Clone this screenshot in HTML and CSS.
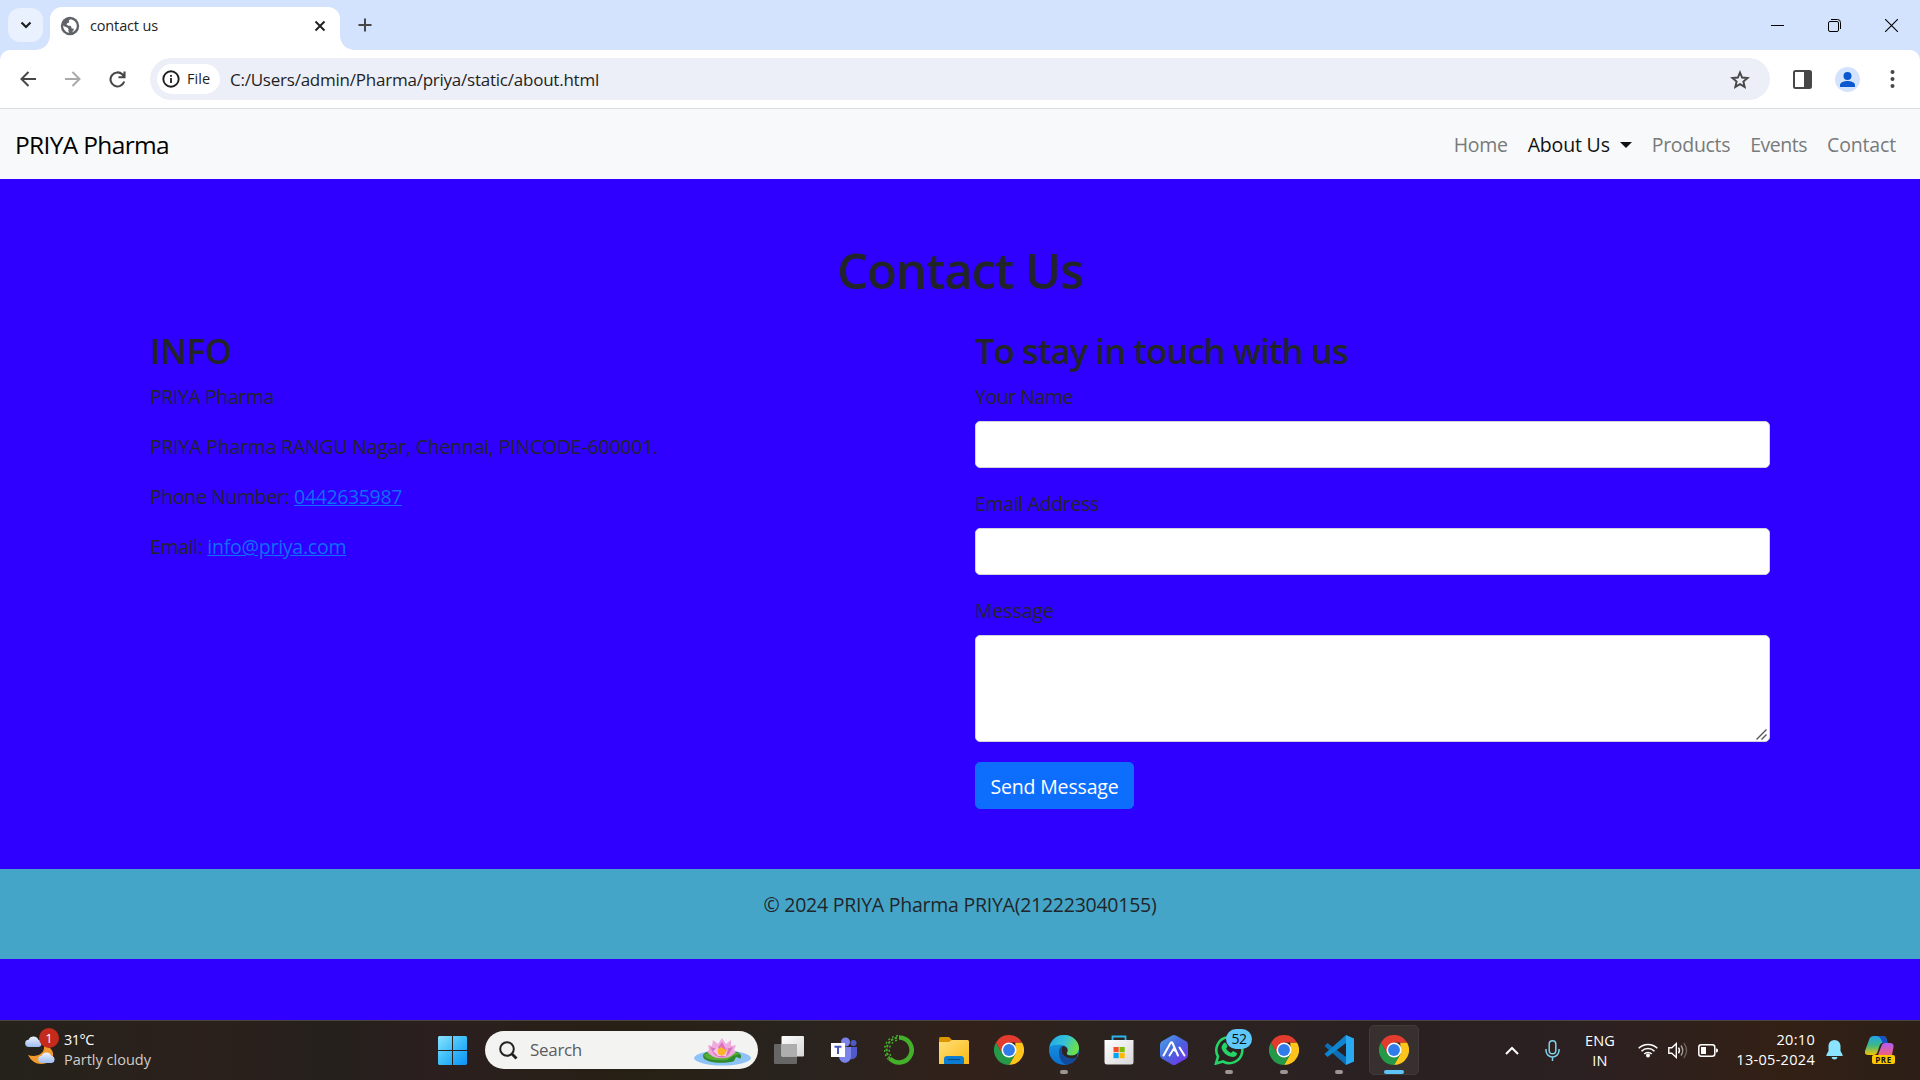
FILE: index.html
```html
<!DOCTYPE html>
<html lang="en">
<head>
<meta charset="utf-8">
<title>contact us</title>
<link rel="stylesheet" href="styles.css">
</head>
<body>
<svg class="defs" aria-hidden="true">
  <defs>
    <linearGradient id="g-win" x1="0" y1="0" x2="1" y2="1"><stop offset="0" stop-color="#8be3ff"/><stop offset=".5" stop-color="#3cbcf8"/><stop offset="1" stop-color="#0a92f5"/></linearGradient>
    <linearGradient id="g-folder" x1="0" y1="0" x2="1" y2="1"><stop offset="0" stop-color="#ffe07a"/><stop offset="1" stop-color="#fbb913"/></linearGradient>
    <linearGradient id="g-white" x1="0" y1="0" x2="1" y2="1"><stop offset="0" stop-color="#fff"/><stop offset="1" stop-color="#d6d6d6"/></linearGradient>
    <linearGradient id="g-edge" x1="0" y1="0" x2="1" y2=".4"><stop offset="0" stop-color="#1ea7ea"/><stop offset=".55" stop-color="#35c1d8"/><stop offset="1" stop-color="#6be04b"/></linearGradient>
    <linearGradient id="g-edge2" x1="0" y1="0" x2="0" y2="1"><stop offset="0" stop-color="#1b9de2"/><stop offset="1" stop-color="#0b6fd0"/></linearGradient>
    <linearGradient id="g-hex" x1="0" y1="0" x2="1" y2="1"><stop offset="0" stop-color="#4fa3ee"/><stop offset=".5" stop-color="#4a63dd"/><stop offset="1" stop-color="#7a2df0"/></linearGradient>
    <linearGradient id="g-cloud" x1="0" y1="0" x2="0" y2="1"><stop offset="0" stop-color="#edf3ff"/><stop offset="1" stop-color="#9dbcf0"/></linearGradient>
    <linearGradient id="g-cop1" x1="0" y1="0" x2="0" y2="1"><stop offset="0" stop-color="#1fa6ea"/><stop offset=".5" stop-color="#3fb884"/><stop offset="1" stop-color="#f5c400"/></linearGradient>
    <linearGradient id="g-cop2" x1="0" y1="0" x2="0" y2="1"><stop offset="0" stop-color="#b05cf5"/><stop offset="1" stop-color="#f0617c"/></linearGradient>
    <symbol id="chrome" viewBox="0 0 48 48">
      <path fill="#fdc51b" d="M44.800 12A24 24 0 0 1 24 48l10.400-18L34 12z"/>
      <path fill="#249a48" d="M24 48A24 24 0 0 1 3.200 12L13.600 30q6 8 20.800 0z"/>
      <path fill="#e33b2e" d="M24 12h20.800A24 24 0 0 0 3.200 12L13.600 30z"/>
      <circle cx="24" cy="24" r="12" fill="#fff"/><circle cx="24" cy="24" r="9.500" fill="#2f7cea"/>
    </symbol>
    <symbol id="cloud" viewBox="0 0 18 12"><path fill="url(#g-cloud)" d="M4 12a3.600 3.600 0 0 1-.4-7.200A5.300 5.300 0 0 1 13.500 5 3.600 3.600 0 0 1 14 12z"/></symbol>
  </defs>
</svg>

<header class="tabstrip">
  <div class="tab-search"><svg width="12" height="8" viewBox="0 0 12 8"><path d="M1.500 1.500 6 6l4.500-4.500" fill="none" stroke="#1f1f1f" stroke-width="2.200"/></svg></div>
  <div class="tab">
    <svg class="globe" width="20" height="20" viewBox="0 0 20 20"><circle cx="10" cy="10" r="9.200" fill="#5f6368"/><path fill="#fff" d="M10.800 3.200c-1.800.5-2.300 1.300-1.700 2.400.4.900-.2 1.400-1.300 1.500-1 .1-1.300 1-1 1.900.3.700 1.200.7 2.300.7 1.500 0 2.300.6 2.300 1.700 0 .9.700 1.100 1.600 1.100 1.200 0 1 1.200.3 2-.6.700-.8 1.200-1.300 1.900 3-1 4.800-3.600 4.800-6.400 0-3.100-2.200-6-6-6.800zM3.200 9.500c1.200 1.500 3 1.200 4.300 2.200 1.500 1 .8 2.300.9 3.300.1.800.8.900.7 1.700C5.700 16.200 3 13.300 3.200 9.500z"/></svg>
    <span class="tab-title">contact us</span>
    <svg class="tab-close" width="12" height="12" viewBox="0 0 12 12"><path d="M1.500 1.500l9 9M10.500 1.500l-9 9" stroke="#1f1f1f" stroke-width="1.900"/></svg>
  </div>
  <svg class="new-tab" width="14" height="14" viewBox="0 0 14 14"><path d="M7 .5v13M.5 7h13" stroke="#474747" stroke-width="2"/></svg>
  <div class="window-buttons">
    <svg width="13" height="13" viewBox="0 0 13 13"><path d="M0 6.500h13" stroke="#000" stroke-width="1"/></svg>
    <svg width="13" height="13" viewBox="0 0 13 13" fill="none" stroke="#000"><rect x=".5" y="2.500" width="10" height="10" rx="1.500"/><path d="M3 .5h6.500a3 3 0 0 1 3 3V10"/></svg>
    <svg width="13" height="13" viewBox="0 0 13 13"><path d="M0 0l13 13M13 0 0 13" stroke="#000" stroke-width="1.100"/></svg>
  </div>
</header>

<div class="toolbar-back">
  <div class="toolbar">
    <svg width="16" height="16" viewBox="0 0 16 16" fill="none" stroke="#474747" stroke-width="2"><path d="M16 8H1.500M8.500 1 1.500 8l7 7"/></svg>
    <svg class="forward" width="16" height="16" viewBox="0 0 16 16" fill="none" stroke="#a9a9a9" stroke-width="2"><path d="M0 8h14.500M7.500 1l7 7-7 7"/></svg>
    <svg class="reload" width="17" height="17" viewBox="0 0 17 17" fill="none" stroke="#474747" stroke-width="2.100"><path d="M15.200 10.500A7 7 0 1 1 13.500 3.500L15.500 6M15.500.5V6.300H9.500"/></svg>
    <div class="omnibox">
      <div class="chip"><svg width="18" height="18" viewBox="0 0 18 18"><circle cx="9" cy="9" r="7.700" fill="none" stroke="#1f1f1f" stroke-width="1.900"/><path d="M9 8v5M9 5v1.800" stroke="#1f1f1f" stroke-width="1.800"/></svg><span>File</span></div>
      <span class="url">C:/Users/admin/Pharma/priya/static/about.html</span>
      <svg class="star" width="20" height="19" viewBox="0 0 20 19"><path d="M10 2.500l2.100 5 5.500.5-4.200 3.600 1.300 5.300L10 14.100l-4.700 2.800 1.300-5.300L2.400 8l5.500-.5z" fill="none" stroke="#474747" stroke-width="1.900"/></svg>
    </div>
    <svg class="panel" width="19" height="19" viewBox="0 0 19 19"><rect x="1" y="1" width="17" height="17" rx="1.500" fill="none" stroke="#474747" stroke-width="2"/><path d="M11 1h7v17h-7z" fill="#474747"/></svg>
    <svg class="profile" width="25" height="25" viewBox="0 0 25 25"><circle cx="12.500" cy="12.500" r="12.500" fill="#d3e3fd"/><circle cx="12.500" cy="9" r="4" fill="#0b57d0"/><path d="M5 20v-2c0-2.800 4.500-4 7.500-4s7.500 1.200 7.500 4v2z" fill="#0b57d0"/></svg>
    <svg class="kebab" width="5" height="18" viewBox="0 0 5 18" fill="#474747"><circle cx="2.500" cy="2" r="2"/><circle cx="2.500" cy="9" r="2"/><circle cx="2.500" cy="16" r="2"/></svg>
  </div>
</div>

<nav class="navbar">
  <span class="brand">PRIYA Pharma</span>
  <div class="nav-links">
    <span class="nav-link">Home</span>
    <span class="nav-link dropdown">About Us<i class="caret"></i></span>
    <span class="nav-link">Products</span>
    <span class="nav-link events">Events</span>
    <span class="nav-link nav-contact">Contact</span>
  </div>
</nav>

<main class="page">
  <section class="container">
    <h1>Contact Us</h1>
    <div class="row">
      <div class="col">
        <h2 class="info-title">INFO</h2>
        <p class="company">PRIYA Pharma</p>
        <p class="address">PRIYA Pharma RANGU Nagar, Chennai, PINCODE-600001.</p>
        <p class="phone">Phone Number: <a>0442635987</a></p>
        <p class="email">Email: <a>info@priya.com</a></p>
      </div>
      <form class="col">
        <h2>To stay in touch with us</h2>
        <label class="label-name">Your Name</label>
        <input class="field" type="text">
        <label class="label-email">Email Address</label>
        <input class="field" type="text">
        <label class="label-message">Message</label>
        <div class="area-wrap">
          <textarea class="field area"></textarea>
          <svg class="grip" width="11" height="11" viewBox="0 0 11 11"><path d="M.5 10.500l10-10M5.500 10.500l5-5" stroke="#555" stroke-width="1.400"/></svg>
        </div>
        <button class="send" type="button">Send Message</button>
      </form>
    </div>
  </section>
  <footer>© 2024 PRIYA Pharma PRIYA(212223040155)</footer>
</main>

<div class="taskbar">
  <div class="weather">
    <div class="weather-icon">
      <svg width="32" height="36" viewBox="0 0 32 36"><path d="M19 16c6 0 10 5 9 10-1 5-6 8-12 8-5 0-10-3-13-9 8 3 17-1 16-9z" fill="#f3992b"/><use href="#cloud" x="0" y="5" width="18" height="12"/><use href="#cloud" x="13" y="21" width="18" height="12"/></svg>
      <span class="badge">1</span>
    </div>
    <div class="weather-text"><span class="temp">31°C</span><span class="sky">Partly cloudy</span></div>
  </div>
  <svg class="start" width="29" height="29" viewBox="0 0 29 29"><path fill="url(#g-win)" d="M1 0h13v14H0V1zM15 0h13l1 1v13H15zM0 15h14v14H1l-1-1zM15 15h14v13l-1 1H15z"/></svg>
  <div class="search">
    <svg width="19" height="19" viewBox="0 0 19 19" fill="none" stroke="#222"><circle cx="8" cy="8" r="6.800" stroke-width="2"/><path d="M13 13l4.500 4.500" stroke-width="2.800"/></svg>
    <span class="search-text">Search</span>
    <svg class="lotus" width="57" height="28" viewBox="0 0 57 28"><ellipse cx="28.500" cy="20" rx="28.500" ry="7.500" fill="#8ec3f7"/><path d="M9 18c0-4 8-6 19-6s19 2 19 6-1 2-5 1l-2 4c-6 3-31 3-31-5z" fill="#2f8a2c"/><path d="M10 17c3-4 33-5 36-1l-7 2-6 4c-8 1-22 0-23-5z" fill="#58ad38"/><path d="M28 0l4 6 5-4v6l5-1-2 5 2 2-5 4c-5 3-14 3-19 0l-5-4 2-2-1-5 4 1 1-6 5 4z" fill="#efaade"/><path d="M28 4l4 7 7-2-4 7c-4 5-11 4-15 0l-4-7 7 2z" fill="#d973bd"/><path d="M24 9l2 6 8-4-2 7h-8l-5-5z" fill="#f7c5e8"/><path d="M24 11l3-2 3 2 3 1-2 4-3 2-4-2z" fill="#fbb52d"/></svg>
  </div>
  <div class="apps">
    <div class="app"><svg width="30" height="28" viewBox="0 0 30 28"><rect y="8" width="23" height="20" rx="1" fill="#666"/><rect x="7.500" width="22.500" height="20.500" rx="1" fill="url(#g-white)"/><path d="M7.500 8H23v12.500H7.500z" fill="#aeaeae"/></svg></div>
    <div class="app"><svg width="28" height="26" viewBox="0 0 28 26"><circle cx="15.500" cy="5" r="4.500" fill="#7b83eb"/><circle cx="23.500" cy="6" r="3" fill="#5059c9"/><path d="M18 10h9v7a5.500 5.500 0 0 1-9 4z" fill="#5059c9"/><path d="M9 10h12v9c0 9-12 9-12 0z" fill="#7b83eb"/><path d="M1 6h14v14H1z" fill="#fff"/><path d="M4.500 9.700h7M8 9.700V17" stroke="#4b53bc" stroke-width="2"/></svg></div>
    <div class="app"><svg width="30" height="30" viewBox="0 0 30 30" fill="none" stroke="#43b02a"><path d="M15 2.500a12.500 12.500 0 1 1-9 21" stroke-width="4.600"/><path d="M13 2.700A12.500 12.500 0 0 0 6 23.500" stroke-width="2" stroke-dasharray="2.500 1.500"/><path d="M14 .8A14 14 0 0 0 5 25M13 5.300a10.500 10.500 0 0 0-6 16" stroke-width="1.500" stroke-dasharray="2 2.300"/></svg></div>
    <div class="app"><svg width="30" height="27" viewBox="0 0 30 27"><path d="M0 1.500Q0 0 1.500 0H10l3 3v7H0z" fill="#dc9700"/><path d="M0 5h10l3-2h15.500Q30 3 30 4.500V27H0z" fill="url(#g-folder)"/><path d="M5 27v-5q0-3 3-3h14q3 0 3 3v5z" fill="#0d7dd2"/><path d="M9 22.500h12" stroke="#064f8c" stroke-width="1.200"/></svg></div>
    <div class="app"><svg width="30" height="30"><use href="#chrome"/></svg></div>
    <div class="app running"><svg width="30" height="30" viewBox="0 0 30 30"><circle cx="15" cy="15" r="15" fill="url(#g-edge2)"/><path d="M.5 12C2 4.500 8 0 15 0c8.500 0 15 6.200 15 13 0 5-3.500 7.500-7.500 7.500-3.500 0-5.500-1.500-4.500-3 2-3 .5-7-5-7.500C7 9.500 2.500 10.500.5 12z" fill="url(#g-edge)"/><path d="M10 17c0-3 1.500-5.500 4-6.500-4 4-1 13 8 13.500 2.500 0 4-.5 5.500-1.500C25 27.500 20.500 30 17 29.500 12 28 10 22 10 17z" fill="#114a9c"/><path d="M14 11c4 .5 5.500 4 4 6.500-1 1.500.5 3.500 5.500 3 2.500-.2 4.500-1.500 5.500-3l-1.500 5c-6 3.500-15.500-1-15-7.500 0-2 .5-3 1.500-4z" fill="#2d2320"/></svg></div>
    <div class="app"><svg width="30" height="30" viewBox="0 0 30 30"><path d="M8.500 6V1.500h13V6" fill="none" stroke="#2cb5ea" stroke-width="1.800"/><path d="M.5 5h29v22q0 2.500-2.500 2.500H3Q.5 29.500.5 27z" fill="url(#g-white)"/><path d="M9.500 12h5.200v5.200H9.500z" fill="#f25022"/><path d="M15.500 12h5.200v5.200h-5.200z" fill="#7fba00"/><path d="M9.500 18h5.200v5.200H9.500z" fill="#00a4ef"/><path d="M15.500 18h5.200v5.200h-5.200z" fill="#ffb900"/></svg></div>
    <div class="app"><svg width="28" height="30" viewBox="0 0 28 30"><path d="M12 .6q2-1.100 4 0l10 5.700q2 1.200 2 3.500v10.400q0 2.300-2 3.500l-10 5.700q-2 1.100-4 0L2 23.700q-2-1.200-2-3.500V9.800Q0 7.500 2 6.300z" fill="url(#g-hex)"/><path d="M3.500 20.500 10.500 8q1-1.500 2 0l5.500 12.500M9.500 20.500l4-6.500 2 2M19.500 12.500l5 8" fill="none" stroke="#fff" stroke-width="2" stroke-linecap="round"/></svg></div>
    <div class="app running"><svg width="30" height="30" viewBox="0 0 30 30"><path d="M2 28.500l2-7A13 13 0 1 1 9 26.500z" fill="none" stroke="#25d366" stroke-width="2.600"/><path d="M9 9q2-3 3.500 0l1 2.500-1.500 2.200q2 3 5 4.300l2-2 4 2q0 4-4.500 4-9-1.500-11-9-.2-2 1.500-4z" fill="#25d366"/></svg><span class="count">52</span></div>
    <div class="app running"><svg width="30" height="30"><use href="#chrome"/></svg></div>
    <div class="app running"><svg width="30" height="30" viewBox="0 0 30 30"><path d="M.5 11 3.500 8 22 22v8z" fill="#0d6fb8"/><path d="M.5 19 3.500 22 22 8V0z" fill="#0f85cf"/><path d="M22 0l8 3.500v23L22 30z" fill="#2aa9f3"/></svg></div>
    <div class="app running active"><svg width="30" height="30"><use href="#chrome"/></svg></div>
  </div>
  <div class="tray">
    <svg width="14" height="9" viewBox="0 0 14 9"><path d="M1 8l6-6 6 6" fill="none" stroke="#fff" stroke-width="2"/></svg>
    <svg class="mic" width="15" height="21" viewBox="0 0 15 21" fill="none" stroke="#7fd0ea" stroke-width="1.500"><rect x="4.200" y=".8" width="6.600" height="13" rx="3.300"/><path d="M1 9v1.500a6.500 6.500 0 0 0 13 0V9M7.500 17v4"/></svg>
    <div class="lang"><span>ENG</span><span>IN</span></div>
    <svg class="wifi" width="20" height="16" viewBox="0 0 20 16" fill="none" stroke="#fff" stroke-width="1.600"><path d="M.7 6.300a13.200 13.200 0 0 1 18.600 0M3.500 9.200a9.200 9.200 0 0 1 13 0M6.300 12a5.200 5.200 0 0 1 7.400 0"/><circle cx="10" cy="13.500" r="2" fill="#fff" stroke="none"/></svg>
    <svg class="vol" width="20" height="17" viewBox="0 0 20 17" fill="none" stroke="#fff" stroke-width="1.400"><path d="M.8 5.800h3l4.500-4.200v13.800L3.800 11.200h-3z"/><path d="M10.500 5.700q2 2.800 0 5.600"/><path d="M13 3.500q3.500 5 0 10" stroke="#aaa29d"/><path d="M15.800 1.200q5.500 7.300 0 14.600" stroke="#6d625c"/></svg>
    <svg class="bat" width="20" height="13" viewBox="0 0 20 13"><rect x=".8" y=".8" width="16" height="11.400" rx="2.500" fill="none" stroke="#fff" stroke-width="1.500"/><path d="M3 3h5v7H3z" fill="#fff"/><path d="M18 4.500h.5q1.500 0 1.500 2t-1.500 2H18z" fill="#fff"/></svg>
    <div class="clock"><span>20:10</span><span>13-05-2024</span></div>
    <svg class="bell" width="17" height="20" viewBox="0 0 17 20" fill="#8be4ff"><path d="M8.500 0C12 0 14.500 2.800 14.500 6v5l2.200 4q.3 1-.7 1H1q-1 0-.7-1l2.200-4V6C2.500 2.800 5 0 8.500 0zM5.500 17h6q-.5 2.500-3 2.500t-3-2.500z"/></svg>
    <div class="copilot"><svg width="30" height="28" viewBox="0 0 30 28"><path d="M9 0h9q2.500 0 3.500 3l1 4h-5q-2 0-3 3l-2 6q-1 3-4 3H3q-4 0-3-4L4 4q1-4 5-4z" fill="url(#g-cop1)"/><path d="M13 0h5q2.500 0 3.500 3l1 4h-5q-2-7-6-7z" fill="#1850c8"/><path d="M20 7h5q4 0 3.500 4L27 19H13l3-8q1-4 4-4z" fill="url(#g-cop2)"/></svg><span class="pre">PRE</span></div>
  </div>
</div>
</body>
</html>
```
FILE: styles.css
```css
* { box-sizing: border-box; }
body { margin: 0; width: 1920px; height: 1080px; overflow: hidden; display: flex; flex-direction: column; font-family: "Open Sans", "Noto Sans", sans-serif; font-size: 19.5px; line-height: 32px; color: #212529; background: #2f00ff; }
svg { display: block; flex: none; }
.defs { position: absolute; width: 0; height: 0; }

/* Tab strip */
.tabstrip { flex: none; height: 50px; display: flex; align-items: center; background: #d3e3fd; padding-left: 8px; }
.tab-search { width: 35px; height: 34px; border-radius: 12px; background: #eaf1fe; display: grid; place-items: center; }
.tab { position: relative; align-self: flex-end; width: 290px; height: 43px; margin-left: 7px; padding: 0 14px 0 10px; background: #fff; border-radius: 12px 12px 0 0; display: flex; align-items: center; font-size: 14.5px; color: #1f1f1f; }
.tab::before, .tab::after { content: ""; position: absolute; bottom: 0; width: 14px; height: 14px; }
.tab::before { left: -14px; background: radial-gradient(circle at 0 0, transparent 13.5px, #fff 14px); }
.tab::after { right: -14px; background: radial-gradient(circle at 100% 0, transparent 13.5px, #fff 14px); }
.globe { margin: 0 10px 6px 0; }
.tab-title { margin-bottom: 6px; letter-spacing: -.15px; }
.tab-close { margin: 0 0 6px auto; }
.new-tab { margin-left: 18px; }
.window-buttons { margin: 0 22px 0 auto; display: flex; gap: 44px; }

/* Address bar */
.toolbar-back { flex: none; height: 59px; background: #d3e3fd; }
.toolbar { height: 59px; background: #fff; border-radius: 10px 10px 0 0; border-bottom: 1px solid #dcdcdc; display: flex; align-items: center; padding: 0 25px 0 20px; }
.forward { margin-left: 29px; }
.reload { margin: 0 1px 0 28px; }
.omnibox { width: 1620px; height: 42px; margin-left: 23px; border-radius: 21px; background: #eceef8; display: flex; align-items: center; padding: 0 20px 0 7px; }
.chip { width: 63px; height: 30px; border-radius: 15px; background: #fff; display: flex; align-items: center; padding-left: 5px; gap: 7px; font-size: 14.5px; color: #1f1f1f; letter-spacing: .1px; }
.url { margin-left: 10px; padding-top: 2px; font-size: 17px; color: #1f1f1f; letter-spacing: -.232px; }
.star { margin-left: auto; }
.panel { margin-left: 23px; }
.profile { margin-left: 23px; }
.kebab { margin-left: auto; }

/* Site navigation */
.navbar { flex: none; height: 70px; padding: 2px 15px 0; background: #f8f9fa; display: flex; align-items: center; justify-content: space-between; }
.brand { font-size: 24.5px; color: #000; letter-spacing: -.66px; }
.nav-links { display: flex; gap: 20px; padding-right: 9px; color: #797a7b; }
.nav-link { letter-spacing: -.3px; }
.dropdown { display: flex; align-items: center; color: #111; letter-spacing: -.18px; }
.events { letter-spacing: -.5px; }
.nav-contact { letter-spacing: -.15px; }
.caret { margin-left: 10px; border: 6px solid transparent; border-top-color: #111; border-bottom: 0; }

/* Contact page */
.page { flex: 1; }
.container { width: 1650px; margin: 0 auto; padding: 60px 0; }
h1 { margin: 0 0 28px; text-align: center; font-size: 49px; line-height: 62px; font-weight: 600; letter-spacing: -1.06px; }
h2 { margin: 0 0 8px; font-size: 34.5px; line-height: 44px; font-weight: 600; letter-spacing: -.854px; }
.info-title { letter-spacing: -.3px; }
.row { display: grid; grid-template-columns: 1fr 1fr; }
.col { padding: 0 15px; }
p { margin: 0 0 18px; }
.company { letter-spacing: -.41px; }
.address { letter-spacing: -.221px; }
.phone, .email { letter-spacing: -.36px; }
.email a { letter-spacing: -.238px; }
a { color: #0d6efd; text-decoration: underline; }
label { display: block; margin-bottom: 8px; }
.label-name { letter-spacing: -.46px; }
.label-email { letter-spacing: -.334px; }
.label-message { letter-spacing: -.08px; }
.field { display: block; width: 100%; height: 47px; margin: 0 0 20px; border: 1px solid #ced4da; border-radius: 5px; background: #fff; outline: 0; }
.area-wrap { position: relative; }
.area { height: 107px; resize: none; }
.grip { position: absolute; right: 3px; bottom: 2px; }
.send { display: block; width: 159px; height: 47px; padding: 2px 0 0; border: 1px solid #0d6efd; border-radius: 5px; background: #0d6efd; color: #fff; font: inherit; letter-spacing: -.171px; }
footer { height: 90px; padding: 20px; background: #45a5c8; text-align: center; letter-spacing: -.248px; }

/* Desktop taskbar */
.taskbar { flex: none; height: 60px; padding-bottom: 1px; border-top: 1px solid #4b4540; background: linear-gradient(90deg, #25221c 0, #2b201c 200px, #25201c 340px, #2b1f1f 430px, #272014 640px, #29231f 800px, #32211a 970px, #2b2320 1120px, #2a2022 1400px, #2c2021 1600px, #332015 1780px, #2c1f17 1920px); display: flex; align-items: center; color: #fff; font-size: 14.5px; line-height: 20px; }
.weather { display: flex; margin-left: 25px; width: 413px; }
.weather-icon { position: relative; width: 32px; }
.badge { position: absolute; left: 14px; top: -2px; width: 20px; height: 20px; border-radius: 50%; background: #c42b1c; text-align: center; font-size: 13px; line-height: 20px; }
.weather-text { display: flex; flex-direction: column; margin-left: 7px; padding-bottom: 1px; }
.temp { letter-spacing: -.48px; }
.sky { color: #d0cdca; }
.start { margin-right: 18px; }
.search { width: 273px; height: 38px; border-radius: 19px; background: #f3f3f2; padding: 0 7px 0 14px; display: flex; align-items: center; color: #5c5c5c; font-size: 17px; }
.search-text { margin-left: 12px; letter-spacing: -.307px; }
.lotus { margin: 4px 0 0 auto; }
.apps { display: flex; margin-left: 3px; }
.app { position: relative; width: 55px; height: 50px; display: grid; place-items: center; }
.running::after { content: ""; position: absolute; left: 50%; bottom: 1px; width: 8px; height: 4px; margin-left: -4px; border-radius: 2px; background: #9b9692; }
.active { width: 50px; margin-left: 3px; border-radius: 5px; background: #37302e; border: 1px solid #403a38; }
.active::after { width: 20px; margin-left: -10px; bottom: 0; background: #5ec5f8; }
.count { position: absolute; left: 25px; top: 4px; width: 26px; height: 20px; border-radius: 10px; background: #5ec8fb; color: #111; text-align: center; font-size: 14px; line-height: 20px; letter-spacing: -.5px; }
.tray { display: flex; align-items: center; margin-left: auto; padding-right: 25px; }
.mic { margin-left: 26px; }
.lang { width: 40px; margin-left: 20px; padding-top: 1px; display: flex; flex-direction: column; align-items: center; letter-spacing: .16px; }
.wifi { margin-left: 18px; }
.vol { margin-left: 10px; }
.bat { margin-left: 10px; }
.clock { width: 80px; margin-left: 17px; padding-bottom: 1px; display: flex; flex-direction: column; align-items: flex-end; letter-spacing: .3px; }
.bell { margin-left: 11px; }
.copilot { position: relative; margin-left: 22px; }
.pre { position: absolute; left: 7px; top: 19px; width: 23px; height: 9px; border-radius: 2px; background: #ffc800; color: #111; font-size: 8px; line-height: 9px; font-weight: 700; text-align: center; letter-spacing: .5px; }
```
